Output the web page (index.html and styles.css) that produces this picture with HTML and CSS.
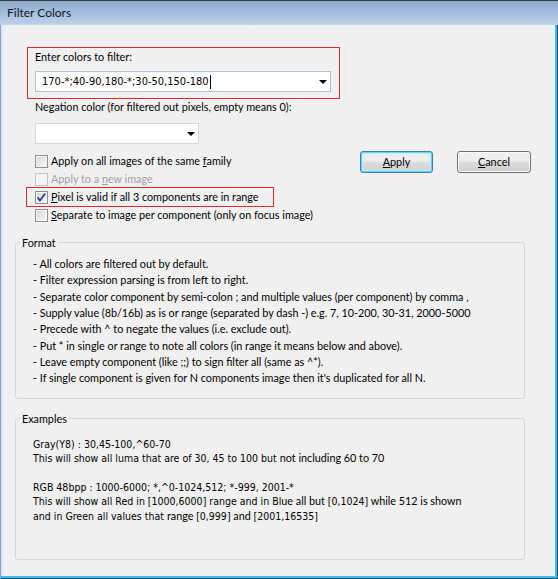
FILE: index.html
```html
<!DOCTYPE html>
<html>
<head>
<meta charset="utf-8">
<link rel="stylesheet" href="styles.css">
</head>
<body>
<div class="window">
  <div class="titlebar"><span class="title">Filter Colors</span></div>
  <div class="client">
    <div class="top">
      <div class="leftcol">
        <div class="redbox">
          <div class="label">Enter colors to filter:</div>
          <div class="combo combo-edit">
            <span class="combo-text">170-*;40-90,180-*;30-50,150-180</span><span class="caret"></span>
            <span class="arrow"></span>
          </div>
        </div>
        <div class="label neg">Negation color (for filtered out pixels, empty means 0):</div>
        <div class="combo combo-list"><span class="arrow"></span></div>
        <div class="checks">
          <div class="cbrow"><span class="cb"></span><span class="cblabel">Apply on all images of the same <u>f</u>amily</span></div>
          <div class="cbrow disabled"><span class="cb"></span><span class="cblabel">Apply to a <u>n</u>ew image</span></div>
          <div class="cbrow marked"><span class="cb checked"><svg width="11" height="11" viewBox="0 0 11 11"><path d="M1.6 5.2 L3.9 8.6 L9.2 1.4" fill="none" stroke="#2b3f86" stroke-width="1.7" stroke-linejoin="miter"/></svg></span><span class="cblabel"><u>P</u>ixel is valid if all 3 components are in range</span></div>
          <div class="cbrow"><span class="cb"></span><span class="cblabel"><u>S</u>eparate to image per component (only on focus image)</span></div>
        </div>
      </div>
      <div class="buttons">
        <div class="btn apply"><u>A</u>pply</div>
        <div class="btn cancel"><u>C</u>ancel</div>
      </div>
    </div>

    <fieldset class="group format">
      <legend>Format</legend>
      <div class="lines">
        <div>- All colors are filtered out by default.</div>
        <div>- Filter expression parsing is from left to right.</div>
        <div>- Separate color component by semi-colon ; and multiple values (per component) by comma ,</div>
        <div>- Supply value (8b/16b) as is or range (separated by dash -) e.g. 7, 10-200, 30-31, 2000-5000</div>
        <div>- Precede with ^ to negate the values (i.e. exclude out).</div>
        <div>- Put * in single or range to note all colors (in range it means below and above).</div>
        <div>- Leave empty component (like ;;) to sign filter all (same as ^*).</div>
        <div>- If single component is given for N components image then it's duplicated for all N.</div>
      </div>
    </fieldset>

    <fieldset class="group examples">
      <legend>Examples</legend>
      <div class="exlines">
        <div><span class="t">Gray(Y8) : 30,45-100,^60-70</span></div>
        <div><span class="t">This will show all luma that are of 30, 45 to 100 but&nbsp;</span><span class="s">not including 60 to 70</span></div>
        <div>&nbsp;</div>
        <div><span class="t">RGB 48bpp : 1000-6000; *,^0-1024,512; *-999, 2001-*</span></div>
        <div><span class="t">This will show all Red in [1000,6000] range and in Bl</span><span class="s">ue all but&nbsp;</span><span class="t">[0,1024]</span><span class="s">&nbsp;while 512 is shown</span></div>
        <div><span class="t">and in Green all values that&nbsp;</span><span class="s">range&nbsp;</span><span class="t">[0,999]</span><span class="s">&nbsp;and&nbsp;</span><span class="t">[2001,16535]</span></div>
      </div>
    </fieldset>
  </div>
</div>
</body>
</html>
```

FILE: styles.css
```css
html, body {
  margin: 0;
  padding: 0;
}

.window {
  width: 558px;
  height: 579px;
  box-sizing: border-box;
  display: flex;
  flex-direction: column;
  background: #dbe6f2;
  box-shadow: inset 1px 0 0 #86a3c6, inset -1px -1px 0 #1f4f72, inset -3px -3px 0 #3cbdec;
  font-family: Lato, "Noto Sans", sans-serif;
  font-size: 10.8px;
  color: #000;
  overflow: hidden;
}

.titlebar {
  height: 25px;
  box-sizing: border-box;
  border-top: 1px solid #3a3a3a;
  background: linear-gradient(#8aa8cd, #a7c0de 55%, #bcd2ea);
  display: flex;
  align-items: center;
  padding-left: 7px;
  flex: none;
}

.title {
  font-size: 12px;
  color: #101820;
  line-height: 15px;
  margin-top: -1px;
}

.client {
  flex: 1;
  margin: 0 3px 3px 3px;
  background: #f0f0f0;
  padding: 22px 30px 0 12px;
  box-shadow: inset -1px 0 0 #e9eef3;
}

.top {
  display: flex;
  padding-left: 12px;
}

.leftcol {
  width: 313px;
  display: flex;
  flex-direction: column;
}

.label {
  line-height: 14px;
  white-space: nowrap;
}

.redbox {
  box-sizing: border-box;
  width: 313px;
  border: 1px solid #e2262b;
  padding: 2px 8px 6px 7px;
}

.combo {
  position: relative;
  box-sizing: border-box;
  height: 21px;
  background: #fff;
  display: flex;
  align-items: center;
}

.combo-edit {
  margin-top: 7px;
  width: 296px;
  border: 1px solid #a9c3dd;
  padding-left: 6px;
}

.combo-text {
  font-family: "DejaVu Sans Condensed", "DejaVu Sans", sans-serif;
  font-size: 11px;
  line-height: 14px;
  white-space: nowrap;
  color: #000;
}

.caret {
  display: inline-block;
  width: 1px;
  height: 14px;
  background: #000;
  margin-left: 1px;
}

.arrow {
  position: absolute;
  right: 3px;
  top: 8px;
  width: 0;
  height: 0;
  border-left: 4px solid transparent;
  border-right: 4px solid transparent;
  border-top: 4px solid #000;
}

.neg {
  margin: 1px 0 0 8px;
}

.combo-list {
  margin: 9px 0 0 8px;
  width: 164px;
  border: 1px solid #d2d8de;
}

.checks {
  margin: 9px 0 0 8px;
  display: flex;
  flex-direction: column;
}

.cbrow {
  display: flex;
  align-items: flex-start;
  height: 18px;
  white-space: nowrap;
}

.cblabel {
  line-height: 16px;
}

.cb {
  flex: none;
  width: 13px;
  height: 13px;
  box-sizing: border-box;
  border: 1px solid #8e8f8f;
  background: linear-gradient(135deg, #d3d5d9, #f8f8f8);
  box-shadow: inset 0 0 0 1px #f5f5f5;
  margin: 2px 3px 0 0;
  display: flex;
  align-items: center;
  justify-content: center;
}

.disabled .cblabel {
  color: #a0a0a0;
}

.disabled .cb {
  border-color: #c4c4c4;
  background: #f4f4f4;
  box-shadow: none;
}

.marked {
  box-sizing: border-box;
  width: 248px;
  height: 20px;
  margin: -2px 0 0 -9px;
  padding-left: 8px;
  border: 1px solid #e2262b;
}

.marked .cb {
  margin-top: 3px;
}

.marked .cblabel {
  line-height: 18px;
}

.buttons {
  display: flex;
  gap: 24px;
  margin: 104px 0 0 20px;
  align-items: flex-start;
}

.btn {
  box-sizing: border-box;
  height: 22px;
  border: 1px solid #707070;
  border-radius: 3px;
  background: linear-gradient(#f2f2f2 0%, #ebebeb 50%, #dddddd 50%, #cfcfcf 100%);
  box-shadow: inset 0 0 0 1px #fbfbfb;
  display: flex;
  align-items: center;
  justify-content: center;
  line-height: 14px;
}

.apply {
  width: 73px;
  border-color: #3c7fb1;
  box-shadow: inset 0 0 0 1px #5fd3f7, inset 0 0 2px 2px #bdebfb;
}

.cancel {
  width: 74px;
}

.group {
  margin: 0;
  padding: 0;
  min-width: 0;
  border: 1px solid #d0d8df;
  border-radius: 3px;
}

.group legend {
  margin-left: 4px;
  padding: 0 2px;
  line-height: 15px;
}

.format {
  margin-top: 10px;
}

.lines {
  padding: 6px 0 11px 17px;
  line-height: 16.33px;
  white-space: nowrap;
}

.examples {
  margin-top: 12px;
}

.exlines {
  padding: 11px 0 35px 17px;
  line-height: 13.67px;
  white-space: nowrap;
}

.t {
  font-family: "DejaVu Sans Condensed", "DejaVu Sans", sans-serif;
  font-size: 10.5px;
}

.s {
  font-family: Lato, "Noto Sans", sans-serif;
  font-size: 10.8px;
}
```
